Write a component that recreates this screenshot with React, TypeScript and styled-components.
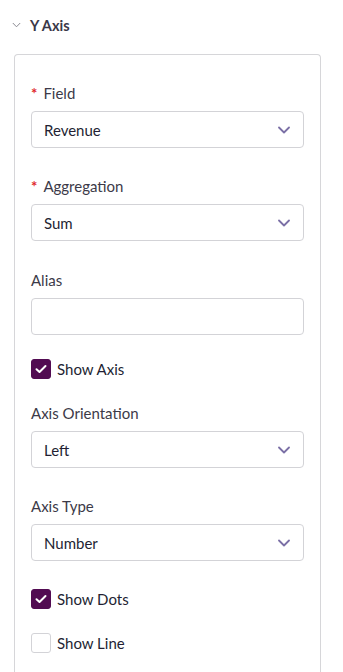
import React from "react";
import styled, { createGlobalStyle } from "styled-components";

const Global = createGlobalStyle`
  html, body { margin: 0; padding: 0; background: #fff; }
  body { font-family: Lato, "Noto Sans", sans-serif; color: #2f2a3d; }
  * { box-sizing: border-box; }
`;

const Page = styled.div`
  width: 343px;
  padding: 15px 0 0 14px;
`;

const Header = styled.div`
  display: flex;
  align-items: center;
  height: 20px;
  gap: 9px;
  padding-left: 0;
  margin-left: -2px;
`;

const HeaderTitle = styled.span`
  font-size: 14.5px;
  font-weight: 700;
  color: #3a3848;
`;

const Card = styled.div`
  margin-top: 19px;
  width: 307px;
  border: 1px solid #d6d6d9;
  border-bottom: none;
  border-radius: 4px 4px 0 0;
  padding: 28px 16px 20px 16px;
  display: flex;
  flex-direction: column;
`;

const FieldBlock = styled.div<{ $mb: number }>`
  display: flex;
  flex-direction: column;
  margin-bottom: ${(p) => p.$mb}px;
`;

const Label = styled.div`
  height: 20px;
  line-height: 20px;
  font-size: 15px;
  color: #3c3a48;
  margin-bottom: 8px;
  display: flex;
  align-items: center;
`;

const Req = styled.span`
  color: #e0282e;
  margin-right: 6px;
  font-size: 15px;
  font-weight: 700;
`;

const SelectBox = styled.div`
  height: 37px;
  border: 1px solid #d3d3d7;
  border-radius: 4px;
  display: flex;
  align-items: center;
  justify-content: space-between;
  padding: 0 13px 0 12px;
  font-size: 15px;
  color: #231f33;
`;

const TextInput = styled.input`
  height: 37px;
  border: 1px solid #d3d3d7;
  border-radius: 4px;
  outline: none;
  padding: 0 12px;
  font-family: inherit;
  font-size: 15px;
  width: 100%;
`;

const CheckRow = styled.label<{ $mb: number }>`
  display: flex;
  align-items: center;
  gap: 6px;
  height: 22px;
  font-size: 15px;
  color: #231f33;
  margin-bottom: ${(p) => p.$mb}px;
`;

const Box = styled.span<{ $on: boolean }>`
  width: 20px;
  height: 20px;
  border-radius: 3px;
  display: inline-flex;
  align-items: center;
  justify-content: center;
  background: ${(p) => (p.$on ? "#520b52" : "#fff")};
  border: 1px solid ${(p) => (p.$on ? "#520b52" : "#d3d3d7")};
`;

const Chevron = ({ color = "#7b70a6", w = 12 }: { color?: string; w?: number }) => (
  <svg width={w} height={w / 2 + 2} viewBox="0 0 12 8" fill="none">
    <path d="M1 1.5 L6 6.5 L11 1.5" stroke={color} strokeWidth="1.8" strokeLinecap="round" strokeLinejoin="round" />
  </svg>
);

const Check = () => (
  <svg width="12" height="10" viewBox="0 0 12 10" fill="none">
    <path d="M1.5 5.2 L4.5 8 L10.5 2" stroke="#fff" strokeWidth="2" strokeLinecap="round" strokeLinejoin="round" />
  </svg>
);

const Select = ({ value }: { value: string }) => (
  <SelectBox>
    <span>{value}</span>
    <Chevron />
  </SelectBox>
);

const CheckItem = ({ on, label, mb }: { on: boolean; label: string; mb: number }) => (
  <CheckRow $mb={mb}>
    <Box $on={on}>{on && <Check />}</Box>
    {label}
  </CheckRow>
);

export default function App() {
  return (
    <>
      <Global />
      <Page>
        <Header>
          <svg width="9" height="6" viewBox="0 0 9 6" fill="none">
            <path d="M0.8 1 L4.5 4.8 L8.2 1" stroke="#8a8a92" strokeWidth="1" />
          </svg>
          <HeaderTitle>Y Axis</HeaderTitle>
        </Header>
        <Card>
          <FieldBlock $mb={28}>
            <Label><Req>*</Req>Field</Label>
            <Select value="Revenue" />
          </FieldBlock>
          <FieldBlock $mb={29}>
            <Label><Req>*</Req>Aggregation</Label>
            <Select value="Sum" />
          </FieldBlock>
          <FieldBlock $mb={23}>
            <Label>Alias</Label>
            <TextInput />
          </FieldBlock>
          <CheckItem on label="Show Axis" mb={23} />
          <FieldBlock $mb={28}>
            <Label>Axis Orientation</Label>
            <Select value="Left" />
          </FieldBlock>
          <FieldBlock $mb={27}>
            <Label>Axis Type</Label>
            <Select value="Number" />
          </FieldBlock>
          <CheckItem on label="Show Dots" mb={22} />
          <CheckItem on={false} label="Show Line" mb={0} />
        </Card>
      </Page>
    </>
  );
}
